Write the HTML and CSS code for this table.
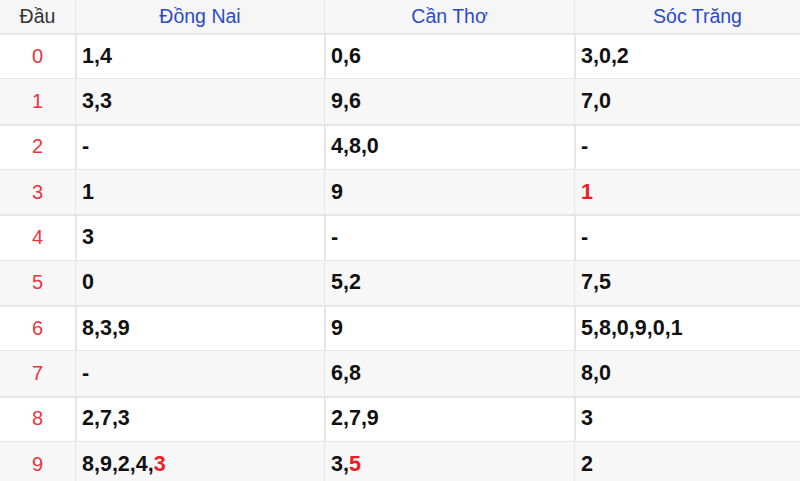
FILE: index.html
```html
<!DOCTYPE html>
<html lang="vi">
<head>
<meta charset="utf-8">
<title>Đầu</title>
<link rel="stylesheet" href="styles.css">
</head>
<body>
<div class="kq">
  <div class="c hd dau">Đầu</div>
  <div class="c hd prov">Đồng Nai</div>
  <div class="c hd prov">Cần Thơ</div>
  <div class="c hd prov">Sóc Trăng</div>

  <div class="c idx">0</div><div class="c v">1,4</div><div class="c v">0,6</div><div class="c v">3,0,2</div>
  <div class="c idx alt">1</div><div class="c v alt">3,3</div><div class="c v alt">9,6</div><div class="c v alt">7,0</div>
  <div class="c idx">2</div><div class="c v">-</div><div class="c v">4,8,0</div><div class="c v">-</div>
  <div class="c idx alt">3</div><div class="c v alt">1</div><div class="c v alt">9</div><div class="c v alt"><span class="hl">1</span></div>
  <div class="c idx">4</div><div class="c v">3</div><div class="c v">-</div><div class="c v">-</div>
  <div class="c idx alt">5</div><div class="c v alt">0</div><div class="c v alt">5,2</div><div class="c v alt">7,5</div>
  <div class="c idx">6</div><div class="c v">8,3,9</div><div class="c v">9</div><div class="c v">5,8,0,9,0,1</div>
  <div class="c idx alt">7</div><div class="c v alt">-</div><div class="c v alt">6,8</div><div class="c v alt">8,0</div>
  <div class="c idx">8</div><div class="c v">2,7,3</div><div class="c v">2,7,9</div><div class="c v">3</div>
  <div class="c idx alt">9</div><div class="c v alt">8,9,2,4,<span class="hl">3</span></div><div class="c v alt">3,<span class="hl">5</span></div><div class="c v alt">2</div>
</div>
</body>
</html>
```
FILE: styles.css
```css
html, body {
  margin: 0;
  padding: 0;
  background: #ffffff;
  overflow: hidden;
}
body {
  font-family: "Liberation Sans", Arial, sans-serif;
}
.kq {
  display: grid;
  width: 821px;
  grid-template-columns: 76px 249px 250px 246px;
  grid-template-rows: 34px repeat(10, 45.33px);
}
.c {
  box-sizing: border-box;
  border-right: 2px solid #e6e6e6;
  border-bottom: 2px solid #e6e6e6;
  display: flex;
  align-items: center;
  margin-right: -1px;
  margin-bottom: -1px;
}
.hd {
  background: #f6f6f6;
  justify-content: center;
  font-size: 19.5px;
  padding-bottom: 1px;
}
.dau {
  color: #333333;
}
.prov {
  color: #2b4bc8;
}
.idx {
  justify-content: center;
  color: #ee3340;
  font-size: 20px;
}
.v {
  padding-left: 6px;
  font-size: 21.5px;
  font-weight: bold;
  color: #111111;
}
.alt {
  background: #f7f7f7;
}
.hl {
  color: #ee1c25;
}
```
